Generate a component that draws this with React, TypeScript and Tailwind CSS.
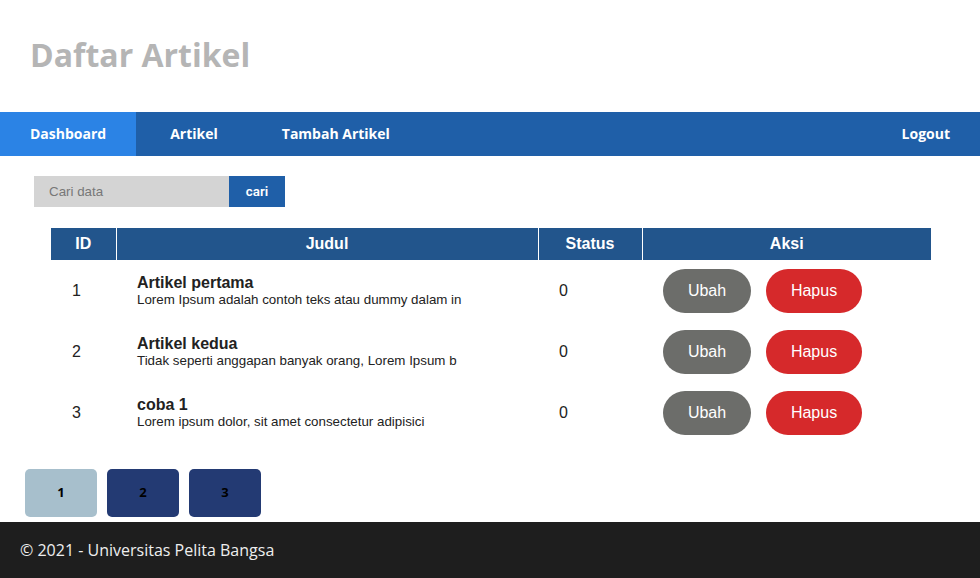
import React from "react";

type Artikel = {
  id: number;
  judul: string;
  isi: string;
  status: number;
};

const artikels: Artikel[] = [
  { id: 1, judul: "Artikel pertama", isi: "Lorem Ipsum adalah contoh teks atau dummy dalam in", status: 0 },
  { id: 2, judul: "Artikel kedua", isi: "Tidak seperti anggapan banyak orang, Lorem Ipsum b", status: 0 },
  { id: 3, judul: "coba 1", isi: "Lorem ipsum dolor, sit amet consectetur adipisici", status: 0 },
];

const menu = ["Dashboard", "Artikel", "Tambah Artikel"];

const App: React.FC = () => {
  return (
    <div className="min-h-[578px] flex flex-col bg-white font-['Liberation_Sans',Arial,sans-serif]">
      {/* header */}
      <header className="h-[112px] flex items-center pl-[30px]">
        <h1 className="font-['Open_Sans',sans-serif] font-bold text-[32px] text-[#b5b5b5] leading-none pb-[2px]">
          Daftar Artikel
        </h1>
      </header>

      {/* nav */}
      <nav className="h-[44px] bg-[#1f5fa8] flex items-stretch font-['Open_Sans',sans-serif] font-bold text-[14px] text-white">
        {menu.map((m, i) => (
          <a
            key={m}
            className={
              i === 0
                ? "flex items-center px-[30px] pb-[2px] bg-[#2b83e5]"
                : "flex items-center px-[30px] pb-[2px] ml-[4px]"
            }
          >
            {m}
          </a>
        ))}
        <a className="flex items-center px-[30px] pb-[2px] ml-auto">Logout</a>
      </nav>

      {/* isi */}
      <main className="flex-1">
        <form className="flex mt-[20px] ml-[34px]">
          <input
            className="w-[195px] h-[31px] bg-[#d4d4d4] pl-[15px] text-[13.33px] text-[#333] placeholder:text-[#777] outline-none"
            placeholder="Cari data"
          />
          <button
            type="button"
            className="w-[56px] h-[31px] bg-[#1f5fa8] text-white text-[13.33px] font-semibold font-['Roboto',sans-serif]"
          >
            cari
          </button>
        </form>

        <table className="mt-[21px] ml-[51px] w-[880px] border-collapse text-[#222]">
          <thead>
            <tr className="h-[32px] bg-[#22558c] text-white text-[16px] font-bold">
              <th className="w-[65px] text-center">ID</th>
              <th className="w-[422px] text-center border-l border-white">Judul</th>
              <th className="w-[104px] text-center border-l border-white">Status</th>
              <th className="text-center border-l border-white">Aksi</th>
            </tr>
          </thead>
          <tbody>
            {artikels.map((a) => (
              <tr key={a.id} className="h-[61px]">
                <td className="pl-[21px] text-[16px] align-middle">{a.id}</td>
                <td className="pl-[21px] align-middle">
                  <div className="text-[16px] font-bold leading-[18px]">{a.judul}</div>
                  <div className="text-[13.33px] leading-[16px]">{a.isi}</div>
                </td>
                <td className="pl-[21px] text-[16px] align-middle">{a.status}</td>
                <td className="pl-[21px] align-middle">
                  <div className="flex gap-[15px]">
                    <button className="w-[88px] h-[44px] rounded-[22px] bg-[#6c6d6a] text-white text-[16px]">
                      Ubah
                    </button>
                    <button className="w-[96px] h-[44px] rounded-[22px] bg-[#d6292b] text-white text-[16px]">
                      Hapus
                    </button>
                  </div>
                </td>
              </tr>
            ))}
          </tbody>
        </table>

        <div className="flex gap-[10px] ml-[25px] mt-[26px] font-['Open_Sans',sans-serif] font-bold text-[13px] text-black">
          {[1, 2, 3].map((p) => (
            <a
              key={p}
              className={
                p === 1
                  ? "w-[72px] h-[48px] rounded-[5px] bg-[#a7bfcc] flex items-center justify-center"
                  : "w-[72px] h-[48px] rounded-[5px] bg-[#233a73] flex items-center justify-center"
              }
            >
              {p}
            </a>
          ))}
        </div>
      </main>

      <footer className="h-[56px] mt-[5px] bg-[#1e1e1e] flex items-center pl-[20px] font-['Open_Sans',sans-serif] text-[16px] text-[#eeeeee]">
        &copy; 2021 - Universitas Pelita Bangsa
      </footer>
    </div>
  );
};

export default App;
